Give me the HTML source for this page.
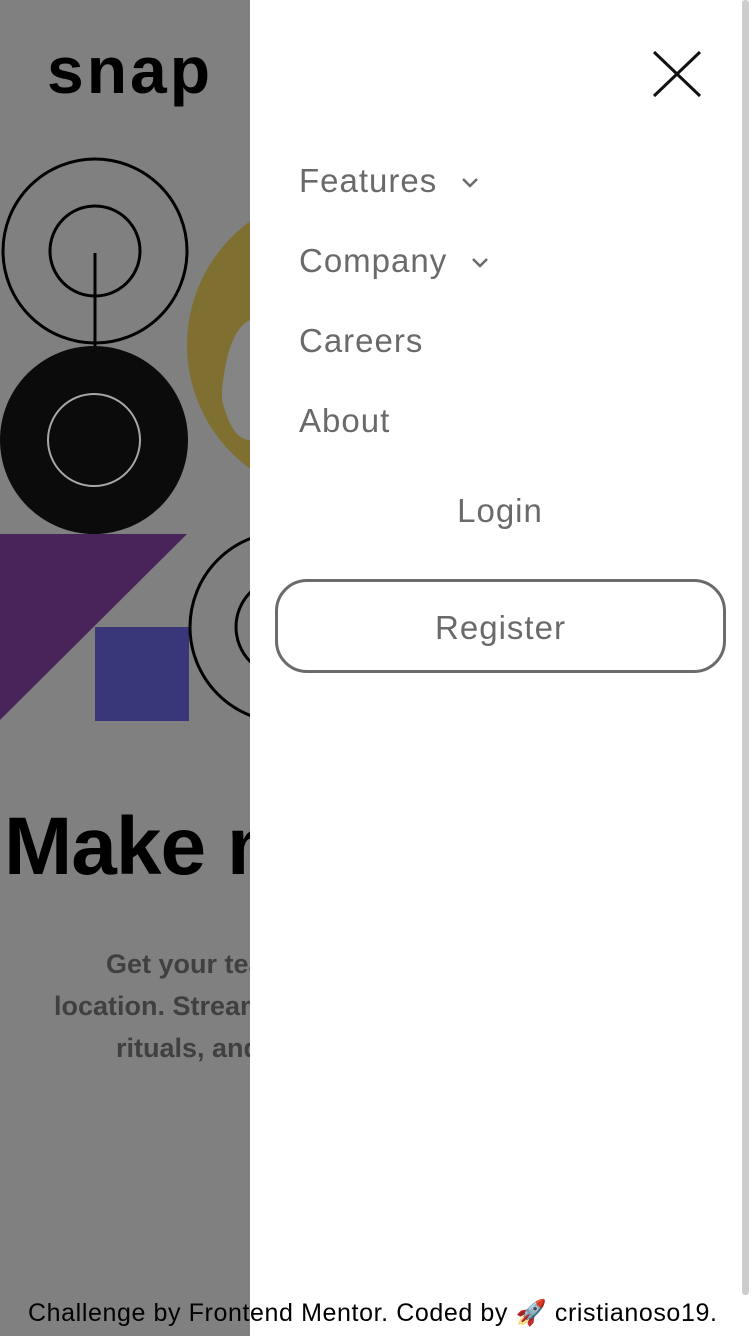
<!DOCTYPE html>
<html><head><style>
*{margin:0;padding:0;box-sizing:border-box}
body{width:752px;height:1336px;overflow:hidden;background:#808080;position:relative;font-family:"Liberation Sans",sans-serif}
.logo{position:absolute;left:47px;top:32px;font-size:66px;font-weight:bold;letter-spacing:3px;color:#000}
.h1{position:absolute;left:4px;top:800px;font-size:82px;font-weight:bold;color:#000;white-space:nowrap;letter-spacing:-1px}
.p{position:absolute;top:943px;left:0;width:500px;font-size:27px;font-weight:bold;color:#404040;line-height:42px;white-space:nowrap}
.panel{position:absolute;left:250px;top:0;width:502px;height:1336px;background:#fff}
.sb{position:absolute;left:742px;top:0;width:7px;height:1295px;background:#cdcdcd;border-radius:3px}
.nav{position:absolute;left:299px;font-size:33px;color:#6a6a6a;letter-spacing:1px}
.chev{display:inline-block;margin-left:24px;vertical-align:middle}
.login{position:absolute;left:250px;width:500px;text-align:center;top:492px;font-size:33px;color:#6a6a6a;letter-spacing:1px}
.reg{position:absolute;left:275px;top:579px;width:451px;height:94px;border:3px solid #6b6b6b;border-radius:32px;text-align:center;line-height:92px;font-size:33px;color:#6a6a6a;letter-spacing:1px}
.foot{position:absolute;left:28px;top:1299px;font-size:25px;color:#000;white-space:nowrap;letter-spacing:0.6px}
</style></head><body>
<div class="logo">snap</div>
<svg style="position:absolute;left:0;top:0" width="250" height="760">
<circle cx="340" cy="345" r="153" fill="#7f7032"/>
<path d="M222 390 Q228 330 250 320 L250 440 Q232 440 222 400Z" fill="#858585"/>
<circle cx="95" cy="251" r="92" fill="none" stroke="#000" stroke-width="3"/>
<circle cx="95" cy="251" r="45" fill="none" stroke="#000" stroke-width="3"/>
<line x1="95" y1="253" x2="95" y2="346" stroke="#000" stroke-width="3"/>
<circle cx="94" cy="440" r="94" fill="#0b0b0b"/>
<circle cx="94" cy="440" r="46" fill="none" stroke="#a8a8a8" stroke-width="2"/>
<path d="M0 534 L187 534 L0 720Z" fill="#48245a"/>
<rect x="95" y="627" width="94" height="94" fill="#393779"/>
<circle cx="285" cy="627" r="95" fill="none" stroke="#000" stroke-width="3"/>
<circle cx="285" cy="627" r="49" fill="none" stroke="#000" stroke-width="3"/>
<rect x="246" y="1145" width="10" height="75" rx="4" fill="#000"/>
</svg>
<div class="h1">Make more</div>
<div class="p"><div style="padding-left:106px">Get your team in sync</div><div style="padding-left:54px">location. Streamline</div><div style="padding-left:116px">rituals, and</div></div>
<div class="panel"></div>
<div class="sb"></div>
<svg style="position:absolute;left:652px;top:50px" width="50" height="48"><path d="M2 2L48 46M48 2L2 46" stroke="#111" stroke-width="3"/></svg>
<div class="nav" style="top:162px">Features<svg class="chev" width="18" height="12"><path d="M2 2L9 9L16 2" fill="none" stroke="#6a6a6a" stroke-width="2.5"/></svg></div>
<div class="nav" style="top:242px">Company<svg class="chev" width="18" height="12"><path d="M2 2L9 9L16 2" fill="none" stroke="#6a6a6a" stroke-width="2.5"/></svg></div>
<div class="nav" style="top:322px">Careers</div>
<div class="nav" style="top:402px">About</div>
<div class="login">Login</div>
<div class="reg">Register</div>
<div class="foot">Challenge by Frontend Mentor. Coded by 🚀 cristianoso19.</div>
</body></html>
